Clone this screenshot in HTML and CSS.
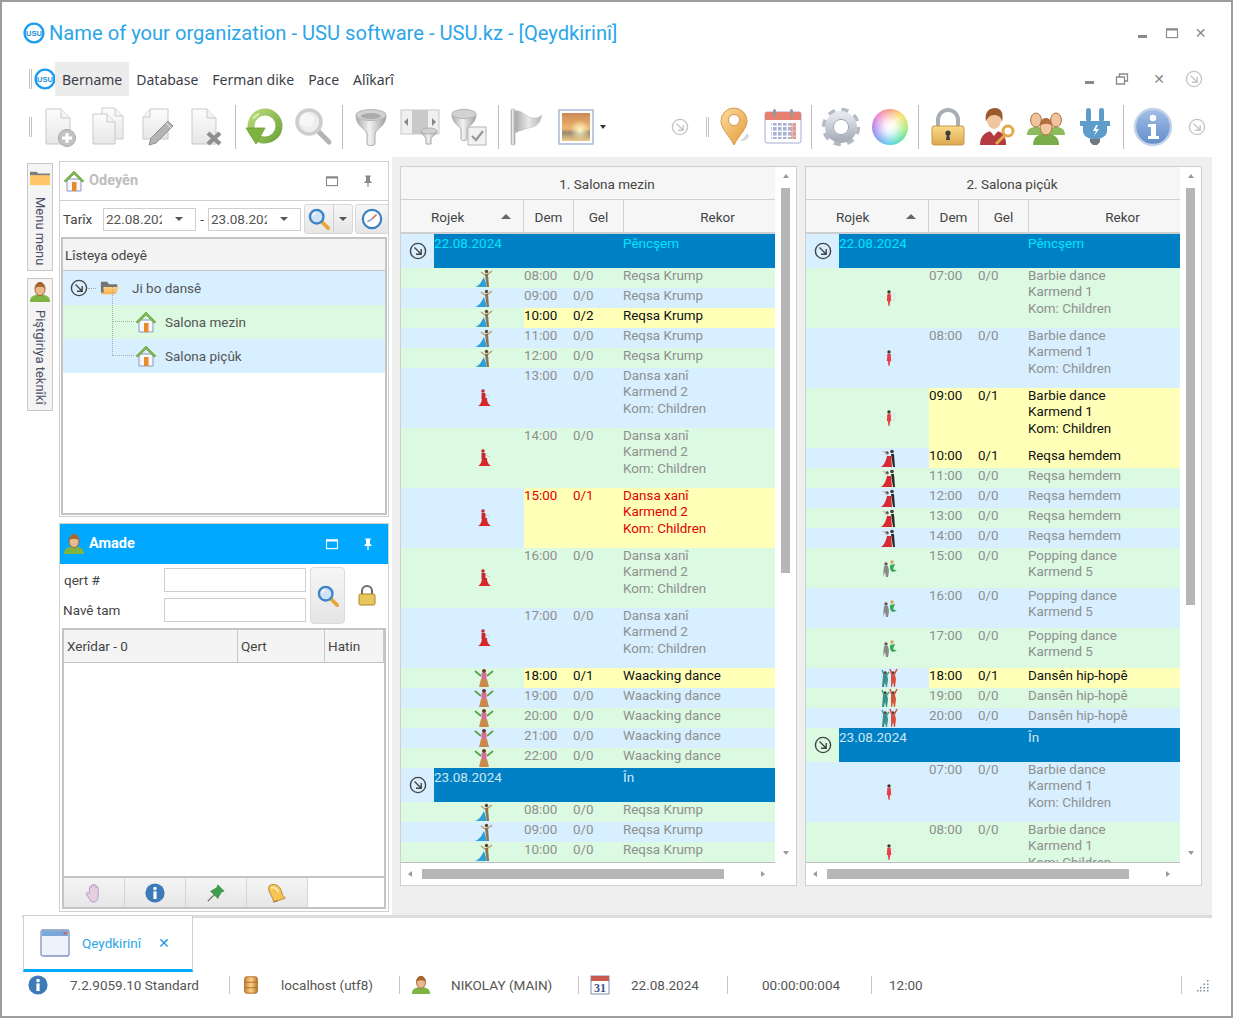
FILE: index.html
```html
<!DOCTYPE html>
<html lang="ku">
<head>
<meta charset="utf-8">
<title>USU</title>
<link rel="stylesheet" href="styles.css">
</head>
<body>
<svg class="defs" width="0" height="0" aria-hidden="true">
<defs>
<linearGradient id="gDoc" x1="0" y1="0" x2="0" y2="1"><stop offset="0" stop-color="#fdfdfd"/><stop offset="1" stop-color="#e6e6e6"/></linearGradient>
<linearGradient id="gMetal" x1="0" y1="0" x2="1" y2="0"><stop offset="0" stop-color="#aaa"/><stop offset=".45" stop-color="#f2f2f2"/><stop offset="1" stop-color="#a0a0a0"/></linearGradient>
<linearGradient id="gFlag" x1="0" y1="0" x2="1" y2="0"><stop offset="0" stop-color="#a9a9a9"/><stop offset=".5" stop-color="#e8e8e8"/><stop offset="1" stop-color="#b5b5b5"/></linearGradient>
<linearGradient id="gGreen" x1="0" y1="0" x2="1" y2="1"><stop offset="0" stop-color="#b6d87a"/><stop offset="1" stop-color="#6fa53a"/></linearGradient>
<linearGradient id="gSun" x1="0" y1="0" x2="0" y2="1"><stop offset="0" stop-color="#c98a55"/><stop offset=".55" stop-color="#eeb56e"/><stop offset=".7" stop-color="#9a8a70"/><stop offset="1" stop-color="#efc98b"/></linearGradient>
<radialGradient id="gGlow" cx=".5" cy=".5" r=".5"><stop offset="0" stop-color="#fff8c8"/><stop offset="1" stop-color="#fff8c8" stop-opacity="0"/></radialGradient>
<linearGradient id="gPin" x1="0" y1="0" x2="1" y2="1"><stop offset="0" stop-color="#fbdc9c"/><stop offset="1" stop-color="#e59a3c"/></linearGradient>
<linearGradient id="gGold" x1="0" y1="0" x2="0" y2="1"><stop offset="0" stop-color="#fbdc8a"/><stop offset="1" stop-color="#dca84f"/></linearGradient>
<linearGradient id="gInfo" x1="0" y1="0" x2="0" y2="1"><stop offset="0" stop-color="#a3bfe6"/><stop offset="1" stop-color="#5f8ecb"/></linearGradient>
<linearGradient id="gGear" x1="0" y1="0" x2="0" y2="1"><stop offset="0" stop-color="#e4e8ee"/><stop offset="1" stop-color="#a9b0bb"/></linearGradient>
<linearGradient id="gFolder" x1="0" y1="0" x2="0" y2="1"><stop offset="0" stop-color="#ffd080"/><stop offset="1" stop-color="#f7b04a"/></linearGradient>
<linearGradient id="gDb" x1="0" y1="0" x2="1" y2="0"><stop offset="0" stop-color="#c98534"/><stop offset=".5" stop-color="#fbd28c"/><stop offset="1" stop-color="#c07a2c"/></linearGradient>
<pattern id="pCal" width="5" height="5" patternUnits="userSpaceOnUse"><rect width="3.6" height="3.6" fill="#a7b1d4"/></pattern>

<symbol id="usu" viewBox="0 0 22 22"><circle cx="11" cy="11" r="9.4" fill="#fff" stroke="#1a9cf0" stroke-width="2.4"/><text x="11" y="13.6" text-anchor="middle" font-family="Liberation Sans" font-weight="700" font-size="7.5" fill="#1a8ee0">USU</text></symbol>
<symbol id="expand" viewBox="0 0 18 18"><circle cx="9" cy="9" r="7.6" fill="none" stroke="currentColor" stroke-width="1.4"/><path d="M5.5 5.5l6.5 6.5M12.2 7v5.2H7" fill="none" stroke="currentColor" stroke-width="1.4"/></symbol>

<symbol id="docadd" viewBox="0 0 40 40"><path d="M7 2h15l9 9v26H7z" fill="url(#gDoc)" stroke="#c9c9c9"/><path d="M22 2v9h9" fill="#f4f4f4" stroke="#c9c9c9"/><circle cx="28" cy="31" r="8.5" fill="#c2c2c2" stroke="#a8a8a8"/><path d="M28 26v10M23 31h10" stroke="#fff" stroke-width="3"/></symbol>
<symbol id="docs" viewBox="0 0 40 40"><path d="M14 1h13l8 8v23H14z" fill="url(#gDoc)" stroke="#cdcdcd"/><path d="M27 1v8h8" fill="#f4f4f4" stroke="#cdcdcd"/><path d="M5 7h14l8 8v22H5z" fill="url(#gDoc)" stroke="#c9c9c9"/><path d="M19 7v8h8" fill="#f4f4f4" stroke="#c9c9c9"/></symbol>
<symbol id="docedit" viewBox="0 0 40 40"><path d="M13 2h18v30H6V10z" fill="url(#gDoc)" stroke="#c9c9c9"/><path d="M13 2v8H6" fill="#f4f4f4" stroke="#c9c9c9"/><path d="M31 14l5 5-17 17-7 2 2-7z" fill="#b4b4b4" stroke="#909090"/><path d="M29 16l5 5" stroke="#e9e9e9"/></symbol>
<symbol id="docdel" viewBox="0 0 40 40"><path d="M6 2h15l9 9v26H6z" fill="url(#gDoc)" stroke="#c9c9c9"/><path d="M21 2v9h9" fill="#f4f4f4" stroke="#c9c9c9"/><path d="M22 26l12 11M34 26L22 37" stroke="#8f8f8f" stroke-width="4.4"/></symbol>
<symbol id="refresh" viewBox="0 0 40 40"><circle cx="21" cy="19" r="14" fill="none" stroke="url(#gGreen)" stroke-width="7"/><circle cx="22" cy="18" r="9" fill="#fff"/><path d="M2 21h19L12 37z" fill="#7fb340" stroke="#6c9c33" stroke-width=".8"/><path d="M9 12a14 14 0 0 1 6-5" stroke="#d8edb0" stroke-width="2" fill="none"/></symbol>
<symbol id="lens" viewBox="0 0 40 40"><path d="M25 24l11 11" stroke="#b4b4b4" stroke-width="5" stroke-linecap="round"/><circle cx="16" cy="15" r="12" fill="#ededed" stroke="#cdcdcd" stroke-width="3.5"/><circle cx="14" cy="13" r="7" fill="#f7f7f7"/></symbol>
<symbol id="funnel" viewBox="0 0 40 40"><path d="M5 8c0 12 10 13 11 19v10c0 2 8 2 8 0V27c1-6 11-7 11-19z" fill="url(#gMetal)" stroke="#ababab"/><ellipse cx="20" cy="8" rx="15" ry="5.5" fill="#d2d2d2" stroke="#b5b5b5"/><ellipse cx="20" cy="9" rx="10" ry="3" fill="#ababab"/></symbol>
<symbol id="cols" viewBox="0 0 40 40"><rect x="1" y="3" width="38" height="24" fill="#f0f0f0" stroke="#c8c8c8"/><rect x="12" y="3" width="16" height="24" fill="#c9c9c9"/><path d="M8 11v8l-4-4zM32 11v8l4-4z" fill="#888"/><path d="M21 24c0 4 5 5 5 8v5h5v-5c0-3 6-4 6-8z" fill="url(#gMetal)" stroke="#aaa"/><ellipse cx="29" cy="24" rx="8" ry="3" fill="#d2d2d2" stroke="#b0b0b0"/></symbol>
<symbol id="funcheck" viewBox="0 0 40 40"><path d="M3 7c0 10 8 11 9 16v9c0 2 6 2 6 0v-9c1-5 9-6 9-16z" fill="url(#gMetal)" stroke="#ababab"/><ellipse cx="15" cy="7" rx="12" ry="4.6" fill="#d2d2d2" stroke="#b5b5b5"/><rect x="19" y="20" width="18" height="18" fill="#f2f2f2" stroke="#b5b5b5"/><path d="M23 29l4 4 7-9" fill="none" stroke="#9a9a9a" stroke-width="2.4"/></symbol>
<symbol id="flag" viewBox="0 0 40 40"><rect x="4" y="2" width="4" height="36" rx="1.5" fill="url(#gMetal)" stroke="#a9a9a9" stroke-width=".6"/><path d="M8 4c6-2 12 7 18 7 3 0 6 0 9-3-2 8-5 11-10 12-6 2-11 3-17 6z" fill="url(#gFlag)" stroke="#bdbdbd" stroke-width=".6"/></symbol>
<symbol id="sunset" viewBox="0 0 36 36"><rect x="1" y="1" width="34" height="34" fill="#fff" stroke="#aab8d8" stroke-width="1.5"/><rect x="4" y="4" width="28" height="28" fill="url(#gSun)"/><circle cx="22" cy="21" r="10" fill="url(#gGlow)"/></symbol>
<symbol id="pin" viewBox="0 0 40 40"><path d="M20 38C15 28 7 22 7 14a13 13 0 0 1 26 0c0 8-8 14-13 24z" fill="url(#gPin)" stroke="#d69a4c"/><circle cx="20" cy="13" r="5.5" fill="#fff" stroke="#d69a4c"/><path d="M26 34c3-2 6-5 7-8l2 3c-1 3-4 5-9 5z" fill="#bbb" opacity=".6"/></symbol>
<symbol id="cal" viewBox="0 0 40 40"><rect x="2" y="5" width="36" height="31" rx="2" fill="#fff" stroke="#a3aed0"/><path d="M2 7a2 2 0 0 1 2-2h32a2 2 0 0 1 2 2v6H2z" fill="#e87f70"/><rect x="8" y="16" width="25" height="16" fill="url(#pCal)"/><rect x="28" y="16" width="5" height="16" fill="#ee9080" opacity=".65"/><rect x="10" y="2" width="3" height="8" rx="1.5" fill="#999"/><rect x="27" y="2" width="3" height="8" rx="1.5" fill="#999"/></symbol>
<symbol id="gear" viewBox="0 0 40 40"><circle cx="20" cy="20" r="16.2" fill="none" stroke="#b4bac4" stroke-width="6" stroke-dasharray="6.7 6"/><circle cx="20" cy="20" r="12" fill="none" stroke="url(#gGear)" stroke-width="8"/><circle cx="20" cy="20" r="7.6" fill="#fff" stroke="#9ba2ad"/></symbol>
<symbol id="lock" viewBox="0 0 40 40"><path d="M10 20V13a10 10 0 0 1 20 0v7" fill="none" stroke="#a9aeb4" stroke-width="4"/><rect x="4" y="19" width="32" height="19" rx="2" fill="url(#gGold)" stroke="#c69a4e"/><circle cx="20" cy="26" r="2.6" fill="#3d3d3d"/><path d="M19 27h2l1 6h-4z" fill="#3d3d3d"/></symbol>
<symbol id="admin" viewBox="0 0 40 40"><path d="M3 38c0-9 5-13 12-14h4c7 1 10 5 10 14z" fill="#b53a3f"/><path d="M13 24l4 5 4-5z" fill="#fff"/><ellipse cx="17" cy="13" rx="7" ry="9" fill="#f0c6a0"/><path d="M9 15C7 4 13 1 18 1c6 0 9 5 7 14-1-5-3-7-8-7-4 0-7 3-8 7z" fill="#9a5a2e"/><circle cx="31" cy="24" r="5" fill="none" stroke="#e0a94c" stroke-width="3"/><path d="M28 28l-9 9" stroke="#e0a94c" stroke-width="3"/></symbol>
<symbol id="group" viewBox="0 0 40 40"><path d="M1 28c0-6 4-8 9-8s9 2 9 8zM21 28c0-6 4-8 9-8s9 2 9 8z" fill="#8bbb5c"/><ellipse cx="10" cy="13" rx="5.4" ry="7" fill="#eec39d" stroke="#b3703f"/><ellipse cx="30" cy="13" rx="5.4" ry="7" fill="#eec39d" stroke="#b3703f"/><path d="M7 38c0-8 5-11 13-11s13 3 13 11z" fill="#79ad4a"/><ellipse cx="20" cy="20" rx="6" ry="8" fill="#f2c8a3" stroke="#b3703f"/><path d="M14 19c0-6 3-8 6-8s6 2 6 8c-2-3-9-3-12 0z" fill="#b3703f"/></symbol>
<symbol id="plug" viewBox="0 0 40 40"><rect x="11" y="1" width="5" height="14" rx="2.4" fill="#5d9ccb"/><rect x="24" y="1" width="5" height="14" rx="2.4" fill="#5d9ccb"/><path d="M5 14h30v5h-3v5c0 5-5 7-8 8h-8c-3-1-8-3-8-8v-5H5z" fill="#5d9ccb"/><path d="M21 18l-3 6h3l-2 5 5-7h-3l2-4z" fill="#fff"/><path d="M15 32h10v3l-3 3h-4l-3-3z" fill="#6e767e"/></symbol>
<symbol id="info" viewBox="0 0 40 40"><circle cx="20" cy="20" r="18" fill="url(#gInfo)" stroke="#c3d2e8" stroke-width="2.4"/><circle cx="20" cy="11" r="3.2" fill="#fff"/><path d="M15 17h8v12h3v3H15v-3h3v-9h-3z" fill="#fff"/></symbol>
<symbol id="infoflat" viewBox="0 0 20 20"><circle cx="10" cy="10" r="9.6" fill="#3d7ab8"/><circle cx="10" cy="5.6" r="1.8" fill="#fff"/><rect x="8.4" y="8.4" width="3.2" height="7.6" fill="#fff"/></symbol>
<symbol id="house" viewBox="0 0 22 22"><path d="M4 9h14v12H4z" fill="#f7f7fb" stroke="#8d97c0"/><rect x="9" y="12" width="4.5" height="9" fill="#e88a2c"/><path d="M1 11L11 1l10 10-2 1-8-8-8 8z" fill="#7cbb4a" stroke="#5e963a" stroke-width=".6"/></symbol>
<symbol id="folder" viewBox="0 0 22 18"><path d="M1 2h7l2 3h9v3H1z" fill="#757575"/><path d="M1 16l4-8h16l-4 8z" fill="url(#gFolder)"/><path d="M1 5h3v9H1z" fill="#757575"/></symbol>
<symbol id="folderflat" viewBox="0 0 24 16"><path d="M0 0h8l2 2h14v4H0z" fill="#7d7d7d"/><rect y="4" width="24" height="12" fill="#ffc76a"/></symbol>
<symbol id="person" viewBox="0 0 22 22"><path d="M1 21c0-6 4-7 10-8 6 1 10 2 10 8z" fill="#7fb342"/><ellipse cx="11" cy="8" rx="5" ry="6.6" fill="#e9b98f" stroke="#a7652f"/><path d="M6 8c0-5 3-7 5-7s5 2 5 7c-1-3-9-3-10 0z" fill="#a7652f"/></symbol>
<symbol id="winmax" viewBox="0 0 14 14"><rect x="1.5" y="3" width="11" height="8.6" fill="none" stroke="currentColor" stroke-width="1.1"/><rect x="1.5" y="2.5" width="11" height="2" fill="currentColor"/></symbol>
<symbol id="pushpin" viewBox="0 0 14 14"><path d="M4 1.5h6v1H9v4.4l1.6 1.2v1H7.6V13H6.4V9.1h-3v-1L5 6.9V2.5H4z" fill="currentColor"/></symbol>
<symbol id="search" viewBox="0 0 24 24"><path d="M14 14l8 8" stroke="#e6a838" stroke-width="4" stroke-linecap="round"/><circle cx="9.5" cy="9.5" r="7.4" fill="#cfe2f6" stroke="#3f83c9" stroke-width="2.6"/><path d="M5 9a4.5 4.5 0 0 1 4-4" stroke="#fff" stroke-width="1.5" fill="none"/></symbol>
<symbol id="clock" viewBox="0 0 24 24"><circle cx="12" cy="12" r="10" fill="#fff" stroke="#3c80c4" stroke-width="2.4"/><path d="M12 12l5-5" stroke="#e25b4a" stroke-width="1.6"/><path d="M12 12L7 15" stroke="#8aa9c8" stroke-width="1.6"/></symbol>
<symbol id="locksm" viewBox="0 0 20 22"><path d="M5 10V7a5 5 0 0 1 10 0v3" fill="none" stroke="#6b6b6b" stroke-width="2"/><rect x="2" y="10" width="16" height="11" rx="1.5" fill="#e8c65a" stroke="#a8862b"/></symbol>
<symbol id="hand" viewBox="0 0 18 22"><path d="M4 11V5a1.2 1.2 0 0 1 2.4 0V3a1.2 1.2 0 0 1 2.4 0v0a1.2 1.2 0 0 1 2.4 0V5a1.2 1.2 0 0 1 2.4 0v9c0 4-2 7-5 7s-4-2-5-4l-3-5c-.6-1.2 1-2.2 2-1z" fill="#e6cfe0" stroke="#a79ac8"/></symbol>
<symbol id="pushgreen" viewBox="0 0 22 22"><path d="M2 20l7-7" stroke="#666" stroke-width="1.3"/><path d="M13 2l7 7-3 1-3 5-1 2-8-8 2-1 5-3z" fill="#3fa04a" stroke="#2d8239" stroke-width=".6"/></symbol>
<symbol id="bell" viewBox="0 0 24 24"><path d="M3 3c6-3 12 0 14 6l2 6 3 3-14 5-1-4-3-6C2 10 1 6 3 3z" fill="#f7c552" stroke="#a87a2a"/><path d="M8 22a3 3 0 0 0 5-2z" fill="#a87a2a"/><path d="M5 6c3-2 7 1 9 5" stroke="#fdeeb8" stroke-width="2" fill="none"/></symbol>
<symbol id="tabwin" viewBox="0 0 30 28"><rect x="1" y="1" width="28" height="26" rx="2" fill="#eef3fb" stroke="#7f95bd" stroke-width="1.3"/><path d="M2 3a1 1 0 0 1 1-1h24a1 1 0 0 1 1 1v4H2z" fill="#7aa7dc"/><rect x="23.500" y="3" width="3" height="2.400" fill="#e25b4a"/></symbol>
<symbol id="db" viewBox="0 0 16 22"><rect x="1" y="2" width="14" height="18" rx="2" fill="url(#gDb)" stroke="#a96a24"/><path d="M1 8h14M1 14h14" stroke="#a96a24"/></symbol>
<symbol id="cal31" viewBox="0 0 20 20"><rect x="1" y="1" width="18" height="18" fill="#fff" stroke="#7f8fb5"/><rect x="1" y="1" width="18" height="5" fill="#c95a50"/><text x="10" y="17" text-anchor="middle" font-family="Liberation Serif" font-size="12" font-weight="700" fill="#3b5488">31</text></symbol>
<symbol id="grip" viewBox="0 0 14 14"><path d="M11 2h1.500v1.500H11zM11 5.500h1.500V7H11zM7.500 5.500H9V7H7.500zM11 9h1.500v1.500H11zM7.500 9H9v1.500H7.500zM4 9h1.500v1.500H4zM11 12h1.500v1.500H11zM7.500 12H9v1.500H7.500zM4 12h1.500v1.500H4zM1 12h1.500v1.500H1z" fill="#7d8a96"/></symbol>

<symbol id="d1" viewBox="0 0 20 20"><path d="M1 19c4-1 7-6 9-10l3 10z" fill="#2f9fd8"/><path d="M11 7l-4-3M11 7l3-1 4-3" stroke="#b8a070" stroke-width="1.400" fill="none"/><path d="M11 6h3l1 13h-2l-1-5z" fill="#8a7250"/><circle cx="12.500" cy="3.500" r="1.700" fill="#5c4430"/></symbol>
<symbol id="d2" viewBox="0 0 20 20"><path d="M4 18c2-1 4-4 4-8h5c0 4 1 6 4 8z" fill="#d8262c"/><rect x="7.500" y="5" width="4" height="6" fill="#c82830"/><circle cx="9" cy="3" r="1.800" fill="#c82830"/><path d="M12 7l4 2" stroke="#ccc" stroke-width="1"/></symbol>
<symbol id="d3" viewBox="0 0 20 20"><path d="M1 3l6 5M19 3l-6 5" stroke="#5aa84a" stroke-width="1.800"/><rect x="7.500" y="5" width="5" height="7" fill="#d66a9c"/><path d="M5 19l2-8h6l2 8z" fill="#c98a4a"/><circle cx="10" cy="3" r="2" fill="#6a3a22"/></symbol>
<symbol id="d4" viewBox="0 0 20 20"><circle cx="10" cy="4" r="1.700" fill="#4a3428"/><path d="M8.300 6h3.400l.5 7h-1l-.7 5h-1l-.7-5h-1z" fill="#e8404a"/><path d="M12 8l5-3M13 13l4-4" stroke="#ddd" stroke-width=".8"/></symbol>
<symbol id="d5" viewBox="0 0 20 20"><path d="M2 19c3-2 5-6 6-11h4l1 11z" fill="#d82a30"/><path d="M12 6h3l1 13h-2l-1-6z" fill="#2c2c2c"/><circle cx="13" cy="3.500" r="1.800" fill="#3a3a3a"/><circle cx="8" cy="5" r="1.700" fill="#5c4030"/><path d="M4 3l5 4" stroke="#bbb" stroke-width="1.200"/></symbol>
<symbol id="d6" viewBox="0 0 20 20"><circle cx="13" cy="4" r="1.700" fill="#d9a050"/><path d="M11 7l5-1-2 5 4 2-5 1-2-3z" fill="#35a85a"/><circle cx="7" cy="6" r="1.700" fill="#6a5648"/><path d="M5 8h4l1 5-1 6H7l-1-5-2 5z" fill="#8a8a8a"/></symbol>
<symbol id="d7" viewBox="0 0 20 20"><circle cx="6" cy="5" r="1.800" fill="#5a4030"/><path d="M3 2l2 5M10 4L7 8" stroke="#3fa090" stroke-width="1.500"/><path d="M4 7h4l1 4-1 8H7l-1-5-1 5H3z" fill="#3a8f86"/><circle cx="14" cy="5" r="1.800" fill="#5a4030"/><path d="M11 1l2 6M18 1l-3 6" stroke="#d8503c" stroke-width="1.500"/><path d="M12 7h4l1 4-1 8h-1l-1-5-1 5h-1z" fill="#d8503c"/></symbol>
</defs>
</svg>

<div class="window">
  <header class="titlebar">
    <svg class="logo"><use href="#usu"/></svg>
    <span class="apptitle">Name of your organization - USU software - USU.kz - [Qeydkirinî]</span>
    <div class="winbtns">
      <span class="wb"><i class="wmin"></i></span>
      <span class="wb"><svg class="ic14"><use href="#winmax"/></svg></span>
      <span class="wb"><span class="wclose">✕</span></span>
    </div>
  </header>

  <nav class="menubar">
    <i class="grip"></i>
    <svg class="logo menulogo"><use href="#usu"/></svg>
    <span class="mi active">Bername</span>
    <span class="mi">Database</span>
    <span class="mi">Ferman dike</span>
    <span class="mi">Pace</span>
    <span class="mi">Alîkarî</span>
    <div class="mdibtns">
      <span class="wb2"><i class="wmin"></i></span>
      <span class="wb2"><svg class="ic14" viewBox="0 0 14 14"><path d="M1.500 5h8v7h-8zM4.500 5V2h8v7h-3M1.500 5h8M4.500 2h8" fill="none" stroke="currentColor" stroke-width="1.300"/></svg></span>
      <span class="wb2 wide"><span class="wclose">✕</span></span>
      <svg class="exp light mdiexp"><use href="#expand"/></svg>
    </div>
  </nav>

  <div class="toolbar">
    <i class="grip tall"></i>
    <span class="tb first"><svg class="ti"><use href="#docadd"/></svg></span>
    <span class="tb"><svg class="ti"><use href="#docs"/></svg></span>
    <span class="tb"><svg class="ti"><use href="#docedit"/></svg></span>
    <span class="tb"><svg class="ti"><use href="#docdel"/></svg></span>
    <i class="sep"></i>
    <span class="tb"><svg class="ti"><use href="#refresh"/></svg></span>
    <span class="tb"><svg class="ti"><use href="#lens"/></svg></span>
    <i class="sep"></i>
    <span class="tb"><svg class="ti"><use href="#funnel"/></svg></span>
    <span class="tb"><svg class="ti"><use href="#cols"/></svg></span>
    <span class="tb"><svg class="ti"><use href="#funcheck"/></svg></span>
    <i class="sep"></i>
    <span class="tb"><svg class="ti"><use href="#flag"/></svg></span>
    <span class="tb"><svg class="ti sun"><use href="#sunset"/></svg></span>
    <i class="caret small"></i>
    <div class="tbright">
      <svg class="exp light"><use href="#expand"/></svg>
      <i class="grip tall mid"></i>
      <span class="tb"><svg class="ti"><use href="#pin"/></svg></span>
      <span class="tb"><svg class="ti"><use href="#cal"/></svg></span>
      <i class="sep"></i>
      <span class="tb"><svg class="ti"><use href="#gear"/></svg></span>
      <span class="tb"><i class="wheel"></i></span>
      <i class="sep"></i>
      <span class="tb"><svg class="ti"><use href="#lock"/></svg></span>
      <span class="tb"><svg class="ti"><use href="#admin"/></svg></span>
      <span class="tb"><svg class="ti"><use href="#group"/></svg></span>
      <span class="tb"><svg class="ti"><use href="#plug"/></svg></span>
      <i class="sep"></i>
      <span class="tb"><svg class="ti"><use href="#info"/></svg></span>
      <svg class="exp light endexp"><use href="#expand"/></svg>
    </div>
  </div>

  <main class="workspace">
    <aside class="sidetabs">
      <div class="sidetab t1"><svg class="sideico folderside"><use href="#folderflat"/></svg><span class="sidelabel">Menu menu</span></div>
      <div class="sidetab t2"><svg class="sideico"><use href="#person"/></svg><span class="sidelabel">Piştgiriya teknîkî</span></div>
    </aside>

    <section class="leftcol">
      <div class="panel rooms">
        <div class="phead">
          <svg class="phico"><use href="#house"/></svg>
          <span class="ptitle">Odeyên</span>
          <svg class="ic14 pbtn one"><use href="#winmax"/></svg>
          <svg class="ic14 pbtn"><use href="#pushpin"/></svg>
        </div>
        <div class="filter">
          <span class="flabel">Tarîx</span>
          <span class="datebox"><span class="dateval">22.08.2024</span><i class="caret"></i></span>
          <span class="dash">-</span>
          <span class="datebox"><span class="dateval">23.08.2024</span><i class="caret"></i></span>
          <span class="splitbtn"><span class="splitmain"><svg class="ic22"><use href="#search"/></svg></span><span class="splitarrow"><i class="caret"></i></span></span>
          <span class="clockbtn"><svg class="ic22"><use href="#clock"/></svg></span>
        </div>
        <div class="treebox">
          <div class="treehead">Lîsteya odeyê</div>
          <div class="tree blue"><svg class="exp tree-exp"><use href="#expand"/></svg><i class="dot-h"></i><svg class="tree-folder"><use href="#folder"/></svg><span>Ji bo dansê</span></div>
          <div class="tree green child"><i class="conn"></i><svg class="tree-house"><use href="#house"/></svg><span>Salona mezin</span></div>
          <div class="tree blue child"><i class="conn"></i><svg class="tree-house"><use href="#house"/></svg><span>Salona piçûk</span></div>
        </div>
      </div>

      <div class="panel ready">
        <div class="phead activehead">
          <svg class="phico"><use href="#person"/></svg>
          <span class="ptitle">Amade</span>
          <svg class="ic14 pbtn one"><use href="#winmax"/></svg>
          <svg class="ic14 pbtn"><use href="#pushpin"/></svg>
        </div>
        <div class="form">
          <span class="flab">qert #</span>
          <span class="finput"></span>
          <span class="fsearch"><svg class="ic22"><use href="#search"/></svg></span>
          <svg class="flock"><use href="#locksm"/></svg>
          <span class="flab nav">Navê tam</span>
          <span class="finput"></span>
        </div>
        <div class="custbox">
          <div class="custhead"><span>Xerîdar - 0</span><span>Qert</span><span>Hatin</span></div>
          <div class="custbody"></div>
          <div class="custbtns">
            <span class="cbtn"><svg class="ic20"><use href="#hand"/></svg></span>
            <span class="cbtn"><svg class="ic20"><use href="#infoflat"/></svg></span>
            <span class="cbtn"><svg class="ic20"><use href="#pushgreen"/></svg></span>
            <span class="cbtn"><svg class="ic20"><use href="#bell"/></svg></span>
          </div>
        </div>
      </div>
    </section>

    <section class="schedules">
      <div class="sched">
        <div class="grid">
          <div class="hall">1. Salona mezin</div>
          <div class="cols"><span class="crojek">Rojek<i class="sort"></i></span><span>Dem</span><span>Gel</span><span class="crekor">Rekor</span></div>
          <div class="date b"><span class="dexp"><svg class="exp"><use href="#expand"/></svg></span><span class="dd">22.08.2024</span><span class="dd">Pêncşem</span></div>
          <div class="row g"><span class="ico"><svg class="dn"><use href="#d1"/></svg></span><span>08:00</span><span>0/0</span><span>Reqsa Krump</span></div>
          <div class="row b"><span class="ico"><svg class="dn"><use href="#d1"/></svg></span><span>09:00</span><span>0/0</span><span>Reqsa Krump</span></div>
          <div class="row g on"><span class="ico"><svg class="dn"><use href="#d1"/></svg></span><span>10:00</span><span>0/2</span><span>Reqsa Krump</span></div>
          <div class="row b"><span class="ico"><svg class="dn"><use href="#d1"/></svg></span><span>11:00</span><span>0/0</span><span>Reqsa Krump</span></div>
          <div class="row g"><span class="ico"><svg class="dn"><use href="#d1"/></svg></span><span>12:00</span><span>0/0</span><span>Reqsa Krump</span></div>
          <div class="row b tall3"><span class="ico"><svg class="dn"><use href="#d2"/></svg></span><span>13:00</span><span>0/0</span><span>Dansa xanî<br>Karmend 2<br>Kom: Children</span></div>
          <div class="row g tall3"><span class="ico"><svg class="dn"><use href="#d2"/></svg></span><span>14:00</span><span>0/0</span><span>Dansa xanî<br>Karmend 2<br>Kom: Children</span></div>
          <div class="row b tall3 on red"><span class="ico"><svg class="dn"><use href="#d2"/></svg></span><span>15:00</span><span>0/1</span><span>Dansa xanî<br>Karmend 2<br>Kom: Children</span></div>
          <div class="row g tall3"><span class="ico"><svg class="dn"><use href="#d2"/></svg></span><span>16:00</span><span>0/0</span><span>Dansa xanî<br>Karmend 2<br>Kom: Children</span></div>
          <div class="row b tall3"><span class="ico"><svg class="dn"><use href="#d2"/></svg></span><span>17:00</span><span>0/0</span><span>Dansa xanî<br>Karmend 2<br>Kom: Children</span></div>
          <div class="row g on"><span class="ico"><svg class="dn"><use href="#d3"/></svg></span><span>18:00</span><span>0/1</span><span>Waacking dance</span></div>
          <div class="row b"><span class="ico"><svg class="dn"><use href="#d3"/></svg></span><span>19:00</span><span>0/0</span><span>Waacking dance</span></div>
          <div class="row g"><span class="ico"><svg class="dn"><use href="#d3"/></svg></span><span>20:00</span><span>0/0</span><span>Waacking dance</span></div>
          <div class="row b"><span class="ico"><svg class="dn"><use href="#d3"/></svg></span><span>21:00</span><span>0/0</span><span>Waacking dance</span></div>
          <div class="row g"><span class="ico"><svg class="dn"><use href="#d3"/></svg></span><span>22:00</span><span>0/0</span><span>Waacking dance</span></div>
          <div class="date b pale"><span class="dexp"><svg class="exp"><use href="#expand"/></svg></span><span class="dd">23.08.2024</span><span class="dd">În</span></div>
          <div class="row g"><span class="ico"><svg class="dn"><use href="#d1"/></svg></span><span>08:00</span><span>0/0</span><span>Reqsa Krump</span></div>
          <div class="row b"><span class="ico"><svg class="dn"><use href="#d1"/></svg></span><span>09:00</span><span>0/0</span><span>Reqsa Krump</span></div>
          <div class="row g"><span class="ico"><svg class="dn"><use href="#d1"/></svg></span><span>10:00</span><span>0/0</span><span>Reqsa Krump</span></div>
        </div>
        <div class="vscroll"><i class="arr up"></i><i class="vthumb v1"></i><i class="arr down"></i></div>
        <div class="hscroll"><i class="arr left"></i><i class="hthumb"></i><i class="arr right"></i></div>
      </div>

      <div class="sched">
        <div class="grid">
          <div class="hall">2. Salona piçûk</div>
          <div class="cols"><span class="crojek">Rojek<i class="sort"></i></span><span>Dem</span><span>Gel</span><span class="crekor">Rekor</span></div>
          <div class="date b"><span class="dexp"><svg class="exp"><use href="#expand"/></svg></span><span class="dd">22.08.2024</span><span class="dd">Pêncşem</span></div>
          <div class="row g tall3"><span class="ico"><svg class="dn"><use href="#d4"/></svg></span><span>07:00</span><span>0/0</span><span>Barbie dance<br>Karmend 1<br>Kom: Children</span></div>
          <div class="row b tall3"><span class="ico"><svg class="dn"><use href="#d4"/></svg></span><span>08:00</span><span>0/0</span><span>Barbie dance<br>Karmend 1<br>Kom: Children</span></div>
          <div class="row g tall3 on"><span class="ico"><svg class="dn"><use href="#d4"/></svg></span><span>09:00</span><span>0/1</span><span>Barbie dance<br>Karmend 1<br>Kom: Children</span></div>
          <div class="row b on"><span class="ico"><svg class="dn"><use href="#d5"/></svg></span><span>10:00</span><span>0/1</span><span>Reqsa hemdem</span></div>
          <div class="row g"><span class="ico"><svg class="dn"><use href="#d5"/></svg></span><span>11:00</span><span>0/0</span><span>Reqsa hemdem</span></div>
          <div class="row b"><span class="ico"><svg class="dn"><use href="#d5"/></svg></span><span>12:00</span><span>0/0</span><span>Reqsa hemdem</span></div>
          <div class="row g"><span class="ico"><svg class="dn"><use href="#d5"/></svg></span><span>13:00</span><span>0/0</span><span>Reqsa hemdem</span></div>
          <div class="row b"><span class="ico"><svg class="dn"><use href="#d5"/></svg></span><span>14:00</span><span>0/0</span><span>Reqsa hemdem</span></div>
          <div class="row g tall2"><span class="ico"><svg class="dn"><use href="#d6"/></svg></span><span>15:00</span><span>0/0</span><span>Popping dance<br>Karmend 5</span></div>
          <div class="row b tall2"><span class="ico"><svg class="dn"><use href="#d6"/></svg></span><span>16:00</span><span>0/0</span><span>Popping dance<br>Karmend 5</span></div>
          <div class="row g tall2"><span class="ico"><svg class="dn"><use href="#d6"/></svg></span><span>17:00</span><span>0/0</span><span>Popping dance<br>Karmend 5</span></div>
          <div class="row b on"><span class="ico"><svg class="dn"><use href="#d7"/></svg></span><span>18:00</span><span>0/1</span><span>Dansên hip-hopê</span></div>
          <div class="row g"><span class="ico"><svg class="dn"><use href="#d7"/></svg></span><span>19:00</span><span>0/0</span><span>Dansên hip-hopê</span></div>
          <div class="row b"><span class="ico"><svg class="dn"><use href="#d7"/></svg></span><span>20:00</span><span>0/0</span><span>Dansên hip-hopê</span></div>
          <div class="date g pale"><span class="dexp"><svg class="exp"><use href="#expand"/></svg></span><span class="dd">23.08.2024</span><span class="dd">În</span></div>
          <div class="row b tall3"><span class="ico"><svg class="dn"><use href="#d4"/></svg></span><span>07:00</span><span>0/0</span><span>Barbie dance<br>Karmend 1<br>Kom: Children</span></div>
          <div class="row g tall3"><span class="ico"><svg class="dn"><use href="#d4"/></svg></span><span>08:00</span><span>0/0</span><span>Barbie dance<br>Karmend 1<br>Kom: Children</span></div>
        </div>
        <div class="vscroll"><i class="arr up"></i><i class="vthumb v2"></i><i class="arr down"></i></div>
        <div class="hscroll"><i class="arr left"></i><i class="hthumb"></i><i class="arr right"></i></div>
      </div>
    </section>
  </main>

  <div class="tabstrip">
    <div class="doctab">
      <svg class="tabico"><use href="#tabwin"/></svg>
      <span class="tablabel">Qeydkirinî</span>
      <span class="tabclose">✕</span>
    </div>
  </div>

  <footer class="status">
    <div class="st s1"><svg class="ic20"><use href="#infoflat"/></svg><span>7.2.9059.10 Standard</span></div>
    <div class="st s2"><svg class="ic20"><use href="#db"/></svg><span>localhost (utf8)</span></div>
    <div class="st s3"><svg class="ic20"><use href="#person"/></svg><span>NIKOLAY (MAIN)</span></div>
    <div class="st s4"><svg class="ic20"><use href="#cal31"/></svg><span>22.08.2024</span></div>
    <div class="st s5"><span>00:00:00:004</span></div>
    <div class="st s6"><span>12:00</span></div>
    <div class="st s7"><svg class="ic14"><use href="#grip"/></svg></div>
  </footer>
</div>
</body>
</html>
```

FILE: styles.css
```css
* { box-sizing: border-box; }
html, body { margin: 0; padding: 0; background: #fff; }
body { font-family: Roboto, "Noto Sans", sans-serif; font-size: 13.5px; color: #555; }
i { display: block; font-style: normal; }
svg { display: block; flex: none; overflow: visible; }
.defs { position: absolute; }

.window { width: 1233px; height: 1018px; border: 2px solid #9c9c9c; display: flex; flex-direction: column; overflow: hidden; background: #fff; }

.logo { width: 22px; height: 22px; }
.ic14 { width: 14px; height: 14px; color: #8a8a8a; }
.ic20 { width: 20px; height: 20px; }
.ic22 { width: 22px; height: 22px; }
.exp { width: 18px; height: 18px; color: #444; }
.exp.light { color: #c6c6c6; }

/* title */
.titlebar { height: 60px; flex: none; display: flex; align-items: center; padding: 2px 16px 0 21px; }
.apptitle { margin-left: 4px; font-size: 20.15px; color: #2ba6e8; white-space: nowrap; }
.winbtns { margin-left: auto; display: flex; }
.wb { width: 29px; display: flex; justify-content: center; align-items: center; color: #8a8a8a; height: 20px; }
.wmin { width: 9px; height: 2.5px; background: #8a8a8a; margin-top: 7px; }
.wclose { font-size: 14px; color: #8a8a8a; font-family: "DejaVu Sans", sans-serif; line-height: 1; }

/* menu */
.menubar { height: 34px; flex: none; display: flex; align-items: center; padding: 0 28px 0 27px; }
.grip { width: 3px; height: 20px; border-left: 1px solid #c4c4c4; border-right: 1px solid #c4c4c4; }
.menulogo { margin: 0 -1px 0 2px; }
.mi { height: 34px; padding: 0 7px; display: flex; align-items: center; font-family: "Noto Sans", sans-serif; font-size: 14px; color: #3d3d48; white-space: nowrap; }
.mi.active { background: #ececec; }
.mdibtns { margin-left: auto; display: flex; align-items: center; }
.wb2 { width: 33px; display: flex; justify-content: center; align-items: center; color: #8a8a8a; height: 18px; }
.wb2.wide { width: 41px; }
.mdiexp { margin-left: 5.5px; }

/* toolbar */
.toolbar { height: 61px; flex: none; display: flex; align-items: center; padding: 1px 0 0 27px; }
.grip.tall { height: 20px; margin-right: 2.5px; }
.grip.mid { margin: 0 0 0 17px; }
.tb { width: 49px; height: 44px; display: flex; align-items: center; justify-content: center; }
.ti { width: 40px; height: 40px; }
.ti.sun { width: 36px; height: 36px; }
.sep { width: 1px; height: 44px; margin: 0 4px; background: #bdbdbd; }
.caret { width: 0; height: 0; border-left: 4px solid transparent; border-right: 4px solid transparent; border-top: 4px solid #555; }
.caret.small { border-left-width: 3px; border-right-width: 3px; border-top-color: #333; margin-left: -1px; }
.tbright { margin-left: auto; display: flex; align-items: center; padding-right: 25px; }
.endexp { margin-left: 11px; }
.wheel { width: 36px; height: 36px; border-radius: 50%; background: radial-gradient(circle at 50% 50%, #fff 0, rgba(255,255,255,.85) 22%, rgba(255,255,255,0) 72%), conic-gradient(#f7a07a, #f8e060, #a6e86a, #58e0a0, #58d0e8, #7aa0f0, #b080f0, #f080c8, #f7a07a); }

/* workspace */
.workspace { height: 758px; flex: none; display: flex; }
.sidetabs { width: 26px; margin: 6px 6px 0 25px; flex: none; display: flex; flex-direction: column; gap: 7px; }
.sidetab { width: 26px; background: #f4f4f4; border: 1px solid #c8c8c8; display: flex; flex-direction: column; align-items: center; overflow: hidden; }
.sidetab.t1 { height: 108px; }
.sidetab.t2 { height: 133px; }
.sideico { width: 22px; height: 22px; margin: 2px 0 7px; }
.folderside { height: 15px; width: 20px; margin: 7px 0 11px; }
.sidelabel { writing-mode: vertical-rl; font-size: 13px; color: #4a4f66; white-space: nowrap; line-height: 22px; }

.leftcol { width: 330px; flex: none; margin-top: 4px; display: flex; flex-direction: column; gap: 6px; }
.panel { border: 1px solid #d0d0d0; display: flex; flex-direction: column; background: #fff; }
.panel.rooms { height: 356px; }
.panel.ready { height: 389px; }
.phead { height: 39px; flex: none; display: flex; align-items: center; padding: 0 0 1px 3px; border-bottom: 1px solid #d0d0d0; }
.phico { width: 22px; height: 22px; }
.ptitle { margin-left: 4px; font-weight: 700; font-size: 14.5px; color: #bdbdbd; }
.pbtn { margin-left: 22px; }
.pbtn.one { margin-left: auto; }
.pbtn:last-child { margin-right: 13px; }
.activehead { background: #00a8ff; border-bottom: 0; height: 40px; }
.activehead .ptitle { color: #fff; }
.activehead .pbtn { color: #fff; }

.filter { height: 36px; flex: none; display: flex; align-items: center; padding-left: 3px; overflow: hidden; color: #444; }
.flabel { width: 40px; flex: none; }
.datebox { width: 93px; height: 23px; flex: none; border: 1px solid #cfcfcf; display: flex; align-items: center; padding: 0 12px 0 2px; justify-content: space-between; background: #fff; }
.dateval { width: 56px; overflow: hidden; white-space: nowrap; color: #555; }
.dash { width: 12px; flex: none; text-align: center; }
.splitbtn { margin-left: 3px; width: 49px; height: 30px; border: 1px solid #d8d8d8; border-radius: 3px; display: flex; background: linear-gradient(#f6f6f6, #e6e6e6); flex: none; }
.splitmain { width: 29px; display: flex; align-items: center; justify-content: center; border-right: 1px solid #cfcfcf; }
.splitarrow { flex: 1; display: flex; align-items: center; justify-content: center; }
.clockbtn { margin-left: 2px; width: 40px; height: 30px; flex: none; border: 1px solid #d8d8d8; border-radius: 3px; display: flex; align-items: center; padding-left: 5px; background: linear-gradient(#f6f6f6, #e6e6e6); }

.treebox { flex: 1; margin: 0 1px 1px; border: 2px solid #c4c4c4; }
.treehead { height: 32px; background: #f4f4f4; display: flex; align-items: center; padding-left: 2px; border-bottom: 1px solid #c4c4c4; color: #444; }
.tree { height: 34px; display: flex; align-items: center; position: relative; color: #555; }
.tree.blue { background: #d7efff; }
.tree.green { background: #dcf9e1; }
.tree-exp { margin-left: 7px; }
.dot-h { width: 8px; border-top: 1px dotted #aaa; }
.tree-folder { width: 20px; height: 18px; margin: 0 12px 0 4px; }
.tree.child { padding-left: 72px; }
.tree-house { width: 22px; height: 22px; margin-right: 8px; }
.conn { position: absolute; left: 49px; top: -18px; width: 22px; height: 35px; border-left: 1px dotted #aaa; border-bottom: 1px dotted #aaa; }

.form { height: 64px; flex: none; display: grid; grid-template-columns: 100px 142px 39px 1fr; grid-template-rows: 24px 24px; gap: 6px 0; padding: 4px 0 0 4px; align-items: center; }
.flab { color: #444; }
.flab.nav { margin-left: -1px; }
.finput { height: 24px; border: 1px solid #cfcfcf; background: #fff; }
.fsearch { grid-row: 1 / 3; grid-column: 3; margin: -2px 0 -3px 4px; height: 57px; width: 35px; border: 1px solid #dcdcdc; border-radius: 4px; background: linear-gradient(#f6f6f6, #e5e5e5); display: flex; align-items: center; justify-content: center; }
.flock { grid-row: 1 / 3; grid-column: 4; width: 20px; height: 22px; margin-left: 12px; }
.custbox { flex: 1; margin: 0 2px 2px; border: 2px solid #c4c4c4; display: flex; flex-direction: column; }
.custhead { height: 33px; flex: none; display: grid; grid-template-columns: 174px 87px 1fr; background: #f4f4f4; border-bottom: 1px solid #c4c4c4; color: #444; }
.custhead span { display: flex; align-items: center; padding-left: 3px; border-right: 1px solid #c8c8c8; }
.custbody { flex: 1; }
.custbtns { height: 31px; flex: none; border-top: 2px solid #c4c4c4; display: flex; }
.cbtn { width: 61px; display: flex; align-items: center; justify-content: center; background: linear-gradient(#f5f5f5, #e6e6e6); border-right: 1px solid #d4d4d4; }

/* schedules */
.schedules { width: 820px; margin-left: 3px; flex: none; background: #efefef; padding: 9px 0 0 8px; display: flex; gap: 8px; align-items: flex-start; height: 758px; }
.sched { width: 397px; height: 720px; flex: none; background: #fff; border: 1px solid #cfcfcf; display: grid; grid-template-columns: 374px 1fr; grid-template-rows: 696px 1fr; }
.grid { overflow: hidden; border-bottom: 1px solid #bdbdbd; }
.hall { height: 33px; background: #f6f6f6; display: flex; align-items: center; justify-content: center; border-bottom: 1px solid #cfcfcf; padding: 1px 0 0 38px; color: #444; }
.cols { height: 34px; display: grid; grid-template-columns: 123px 50px 50px 151px; background: #f6f6f6; border-bottom: 2px solid #cfcfcf; color: #444; }
.cols span { display: flex; align-items: center; justify-content: center; border-right: 1px solid #cfcfcf; padding-top: 1px; }
.cols span:last-child { border-right: 0; }
.cols .crekor { padding-left: 36px; }
.cols .crojek { justify-content: flex-start; padding-left: 30px; }
.sort { width: 0; height: 0; margin-left: 37px; border-left: 5px solid transparent; border-right: 5px solid transparent; border-bottom: 5px solid #666; }

.row { display: grid; grid-template-columns: 123px 49px 50px 152px; height: 20px; font-size: 13.4px; line-height: 16.3px; color: #8f8f8f; }
.row > span { white-space: nowrap; overflow: hidden; }
.row.tall3 { height: 60px; }
.row.tall2 { height: 40px; }
.g { background: #dcf9e1; }
.b { background: #d7efff; }
.ico { display: flex; align-items: center; padding-left: 73px; }
.dn { width: 20px; height: 20px; }
.on { color: #111; }
.on > span:not(.ico) { background: #ffffb8; }
.on.red { color: #e00000; }
.date { display: grid; grid-template-columns: 33px 189px 152px; height: 34px; line-height: 18px; }
.dexp { display: flex; align-items: center; justify-content: center; }
.dd { background: #0080c4; color: #00e6ff; }
.pale .dd { color: #cfe6f2; }

.vscroll { display: flex; flex-direction: column; align-items: center; padding-top: 7px; }
.arr { width: 0; height: 0; border: 3.5px solid transparent; flex: none; }
.arr.up { border-bottom: 4px solid #999; border-top: 0; }
.arr.down { border-top: 4px solid #999; border-bottom: 0; margin-top: auto; margin-bottom: 8px; }
.arr.left { border-right: 4px solid #999; border-left: 0; }
.arr.right { border-left: 4px solid #999; border-right: 0; margin-left: auto; }
.vthumb { width: 9px; background: #b6b6b6; margin-top: 10px; }
.vthumb.v1 { height: 385px; }
.vthumb.v2 { height: 417px; }
.hscroll { grid-column: 1 / 3; display: flex; align-items: center; padding: 0 31px 0 7px; }
.hthumb { width: 302px; height: 10px; background: #b6b6b6; margin-left: 10px; }

/* tabs */
.tabstrip { height: 57px; flex: none; border-top: 3px solid #dcdcdc; margin: 0 19px 0 20px; }
.doctab { width: 170px; height: 57px; margin: -3px 0 0 1px; border: 1px solid #cfcfcf; border-bottom: 3px solid #00a8ff; background: #fff; display: flex; align-items: center; padding: 1px 0 0 16px; position: relative; }
.tabico { width: 30px; height: 28px; }
.tablabel { margin-left: 12px; color: #2ba6e8; }
.tabclose { margin-left: 17px; color: #1e96e0; font-weight: 700; font-size: 14px; font-family: "DejaVu Sans", sans-serif; }

/* status */
.status { flex: 1; display: grid; grid-template-columns: 228px 170px 179px 149px 144px 310px 1fr; align-items: center; padding-bottom: 18px; color: #555; }
.st { height: 18px; display: flex; align-items: center; gap: 20px; border-right: 1px solid #c4c4c4; white-space: nowrap; }
.s1 { padding-left: 26px; gap: 22px; }
.s2 { padding-left: 11px; }
.s3 { padding-left: 11px; }
.s4 { padding-left: 11px; gap: 21px; }
.s5 { padding-left: 34px; }
.s6 { padding-left: 17px; }
.s7 { border-right: 0; padding-left: 14px; }
```
